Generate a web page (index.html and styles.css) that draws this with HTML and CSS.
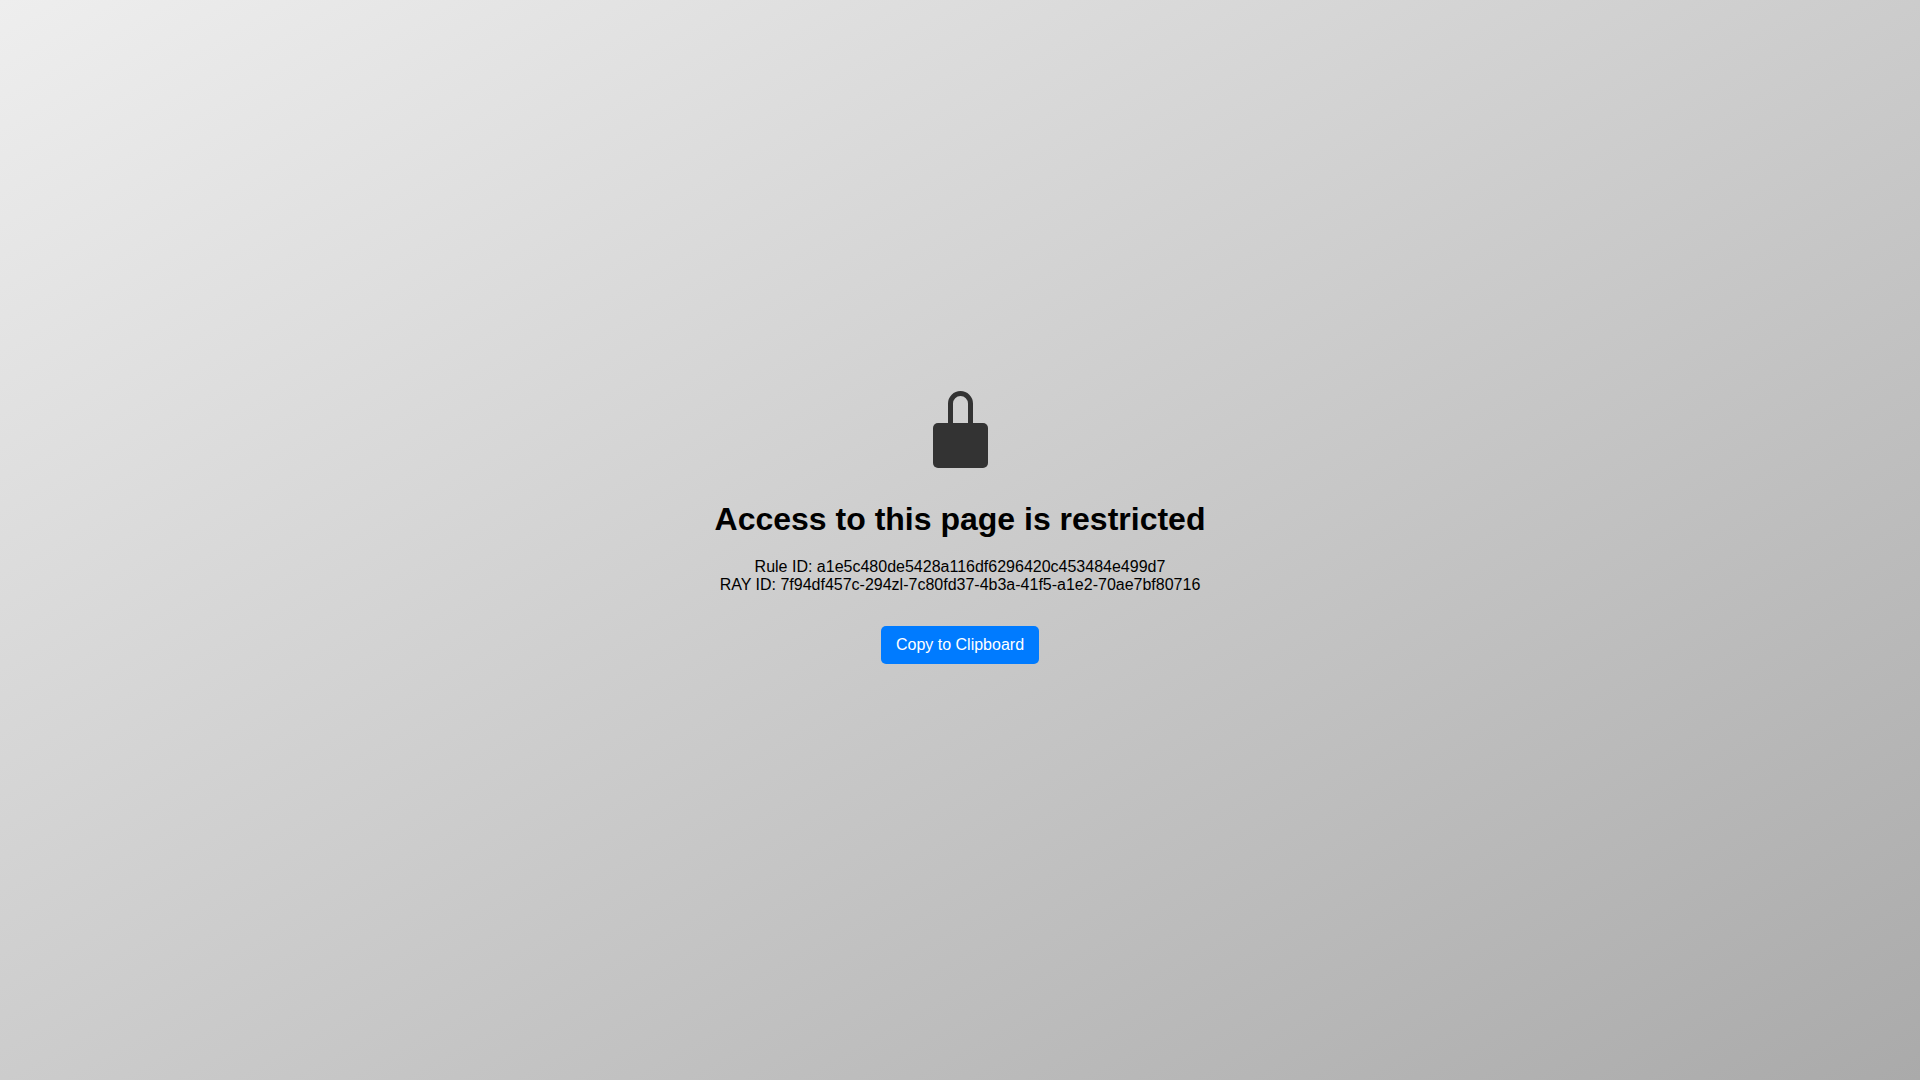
FILE: index.html
```html
<!DOCTYPE html>
<html lang="en">
<head>
<meta charset="utf-8">
<title>Access restricted</title>
<link rel="stylesheet" href="styles.css">
</head>
<body>
<main class="container">
<div class="lock" aria-hidden="true"><svg width="56" height="78" viewBox="-1 0 56 78"><path d="M17.500 34V12.500a10 10 0 0 1 20 0V34" fill="none" stroke="#333" stroke-width="5"/><rect y="32" width="55" height="45" rx="5" fill="#333"/></svg></div>
<h1 class="title">Access to this page is restricted</h1>
<p class="details">Rule ID: a1e5c480de5428a116df6296420c453484e499d7<br>RAY ID: 7f94df457c-294zl-7c80fd37-4b3a-41f5-a1e2-70ae7bf80716</p>
<button class="copy" type="button">Copy to Clipboard</button>
</main>
</body>
</html>
```
FILE: styles.css
```css
body {
  margin: 0;
  min-height: 100vh;
  display: flex;
  align-items: center;
  justify-content: center;
  font-family: "Liberation Sans", Arial, sans-serif;
  font-size: 16px;
  color: #000;
  background: linear-gradient(to bottom right, #eee, #aaa);
}

.container {
  padding-bottom: 25px;
  text-align: center;
}

.lock svg {
  display: block;
  margin: 0 auto 32px;
}

.title {
  margin: 0 0 20px;
  font-size: 32px;
  line-height: 37px;
}

.details {
  margin: 0 0 32px;
  line-height: 18px;
}

.copy {
  padding: 10px 15px;
  border: 0;
  border-radius: 5px;
  background: #007bff;
  color: #fff;
  font: inherit;
  line-height: 18px;
  cursor: pointer;
}
```
